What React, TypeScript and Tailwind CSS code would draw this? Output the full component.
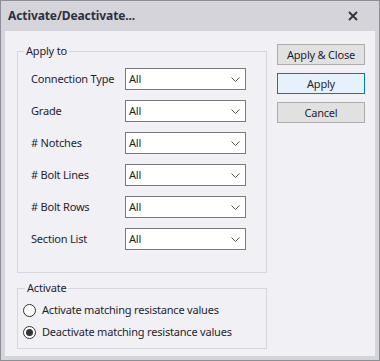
import { useState } from "react";

const ROWS = ["Connection Type", "Grade", "# Notches", "# Bolt Lines", "# Bolt Rows", "Section List"];

function Chevron() {
  return (
    <svg width="9" height="5" viewBox="0 0 9 5" className="shrink-0">
      <polyline points="0.5,0.5 4.5,4.5 8.5,0.5" fill="none" stroke="#555" strokeWidth="1" />
    </svg>
  );
}

function Select({ value }: { value: string }) {
  return (
    <div className="w-[121px] h-[22px] border border-[#7a7a7a] bg-white flex items-center justify-between pl-[3px] pr-[5px]">
      <span>{value}</span>
      <Chevron />
    </div>
  );
}

function Radio({ checked, label, onClick }: { checked: boolean; label: string; onClick: () => void }) {
  return (
    <div className="h-[22px] flex items-center gap-[6px] cursor-default whitespace-nowrap" onClick={onClick}>
      <div className="w-[13px] h-[13px] shrink-0 rounded-full border border-[#333] bg-white flex items-center justify-center">
        {checked && <div className="w-[7px] h-[7px] rounded-full bg-[#333]" />}
      </div>
      <span>{label}</span>
    </div>
  );
}

export default function App() {
  const [mode, setMode] = useState<"activate" | "deactivate">("deactivate");

  return (
    <div
      className="w-[380px] h-[361px] border border-[#8e8e96] bg-[#d4d4da] flex flex-col text-[11px] tracking-[-0.2px] text-[#1f1f2e] whitespace-nowrap"
      style={{ fontFamily: '"Noto Sans", "Open Sans", sans-serif' }}
    >
      {/* Title bar */}
      <div className="h-[30px] flex items-center justify-between pl-[7px] pr-[21px] shrink-0">
        <span className="font-bold text-[12px] tracking-[-0.1px] text-[#2f2f3f]">Activate/Deactivate...</span>
        <svg width="10" height="10" viewBox="0 0 10 10">
          <path d="M1 1 L9 9 M9 1 L1 9" stroke="#333" strokeWidth="1.8" />
        </svg>
      </div>

      {/* Body */}
      <div className="flex-1 mx-[4px] mb-[4px] bg-[#f0f0f5] flex gap-[10px] pl-[12px] pt-[12px]">
        <div className="w-[250px] flex flex-col">
          <fieldset className="border border-[#d6d6dc] px-[13px] pb-[22px]">
            <legend className="ml-[-7px] px-[2px] leading-[16px]">Apply to</legend>
            <div className="flex flex-col gap-[10px] pt-[9px]">
              {ROWS.map((r) => (
                <div key={r} className="flex items-center">
                  <span className="w-[94px]">{r}</span>
                  <Select value="All" />
                </div>
              ))}
            </div>
          </fieldset>

          <fieldset className="mt-[7px] border border-[#d6d6dc] pl-[5px] pr-[13px] pb-[5px]">
            <legend className="ml-[2px] px-[2px] leading-[16px]">Activate</legend>
            <div className="pt-[3px]">
              <Radio checked={mode === "activate"} label="Activate matching resistance values" onClick={() => setMode("activate")} />
              <Radio checked={mode === "deactivate"} label="Deactivate matching resistance values" onClick={() => setMode("deactivate")} />
            </div>
          </fieldset>
        </div>

        <div className="w-[88px] flex flex-col gap-[8px] mt-[1px]">
          <button className="h-[21px] border border-[#adadad] bg-[#e1e1e1] leading-none">Apply &amp; Close</button>
          <button className="h-[21px] border border-[#0078d7] bg-[#e5f1fb] leading-none">Apply</button>
          <button className="h-[21px] border border-[#adadad] bg-[#e1e1e1] leading-none">Cancel</button>
        </div>
      </div>
    </div>
  );
}
